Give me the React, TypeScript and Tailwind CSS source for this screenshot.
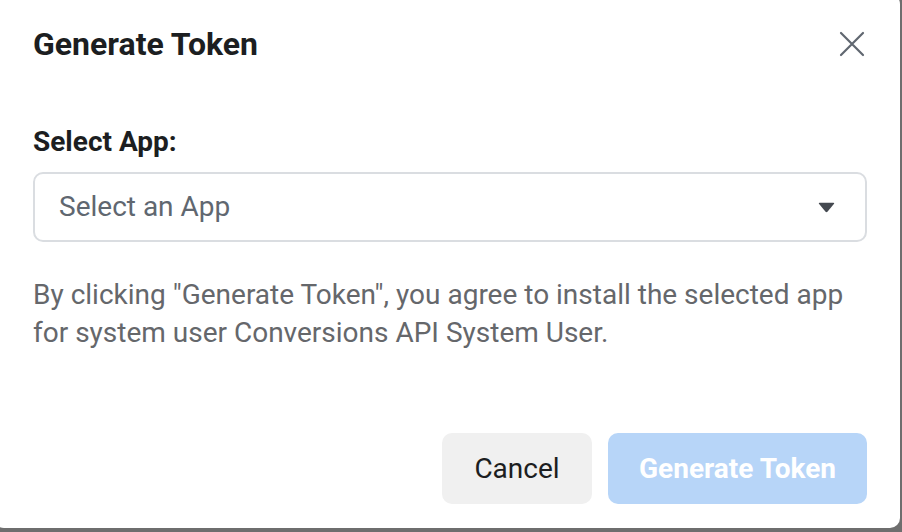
import React from 'react';

const App: React.FC = () => {
  return (
    <div className="w-[902px] h-[532px] overflow-hidden bg-[#6e6e6e]" style={{ fontFamily: 'Roboto, "Liberation Sans", sans-serif' }}>
      <div className="-ml-[6px] -mt-[6px] w-[906px] h-[534px] rounded-[10px] bg-white pl-[39px] pr-[33px] pt-[30px] flex flex-col">
        {/* Header */}
        <div className="flex items-center justify-between h-[40px]">
          <h2 className="text-[32px] font-bold text-[#1c1e21]">Generate Token</h2>
          <button className="w-[30px] h-[30px] flex items-center justify-center text-[#606770]">
            <svg width="26" height="26" viewBox="0 0 26 26" fill="none" stroke="currentColor" strokeWidth="2.2" strokeLinecap="round">
              <path d="M2 2L24 24M24 2L2 24" />
            </svg>
          </button>
        </div>

        {/* Body */}
        <div className="mt-[63px]">
          <label className="block text-[28px] font-bold text-[#1c1e21] leading-[30px]">Select App:</label>
          <div className="mt-[15px] h-[70px] rounded-[10px] border-2 border-[#dadde1] flex items-center justify-between pl-[24px] pr-[30px]">
            <span className="text-[28px] text-[#606770]">Select an App</span>
            <svg width="17" height="11" viewBox="0 0 18 11" className="text-[#444950]">
              <path d="M1 1.5 Q0.5 0.5 1.8 0.5 H16.2 Q17.5 0.5 17 1.5 L10 10 Q9 11 8 10 Z" fill="currentColor" />
            </svg>
          </div>
          <p className="mt-[34px] text-[28px] leading-[38px] text-[#65676b]">
            By clicking "Generate Token", you agree to install the selected app for system user Conversions API System User.
          </p>
        </div>

        {/* Footer */}
        <div className="mt-auto mb-[24px] flex justify-end gap-[16px]">
          <button className="h-[71px] w-[150px] rounded-[10px] bg-[#f0f0f0] text-[28px] text-[#1c1e21]">Cancel</button>
          <button className="h-[71px] w-[259px] rounded-[10px] bg-[#b7d5f8] text-[28px] font-bold text-white">Generate Token</button>
        </div>
      </div>
    </div>
  );
};

export default App;
